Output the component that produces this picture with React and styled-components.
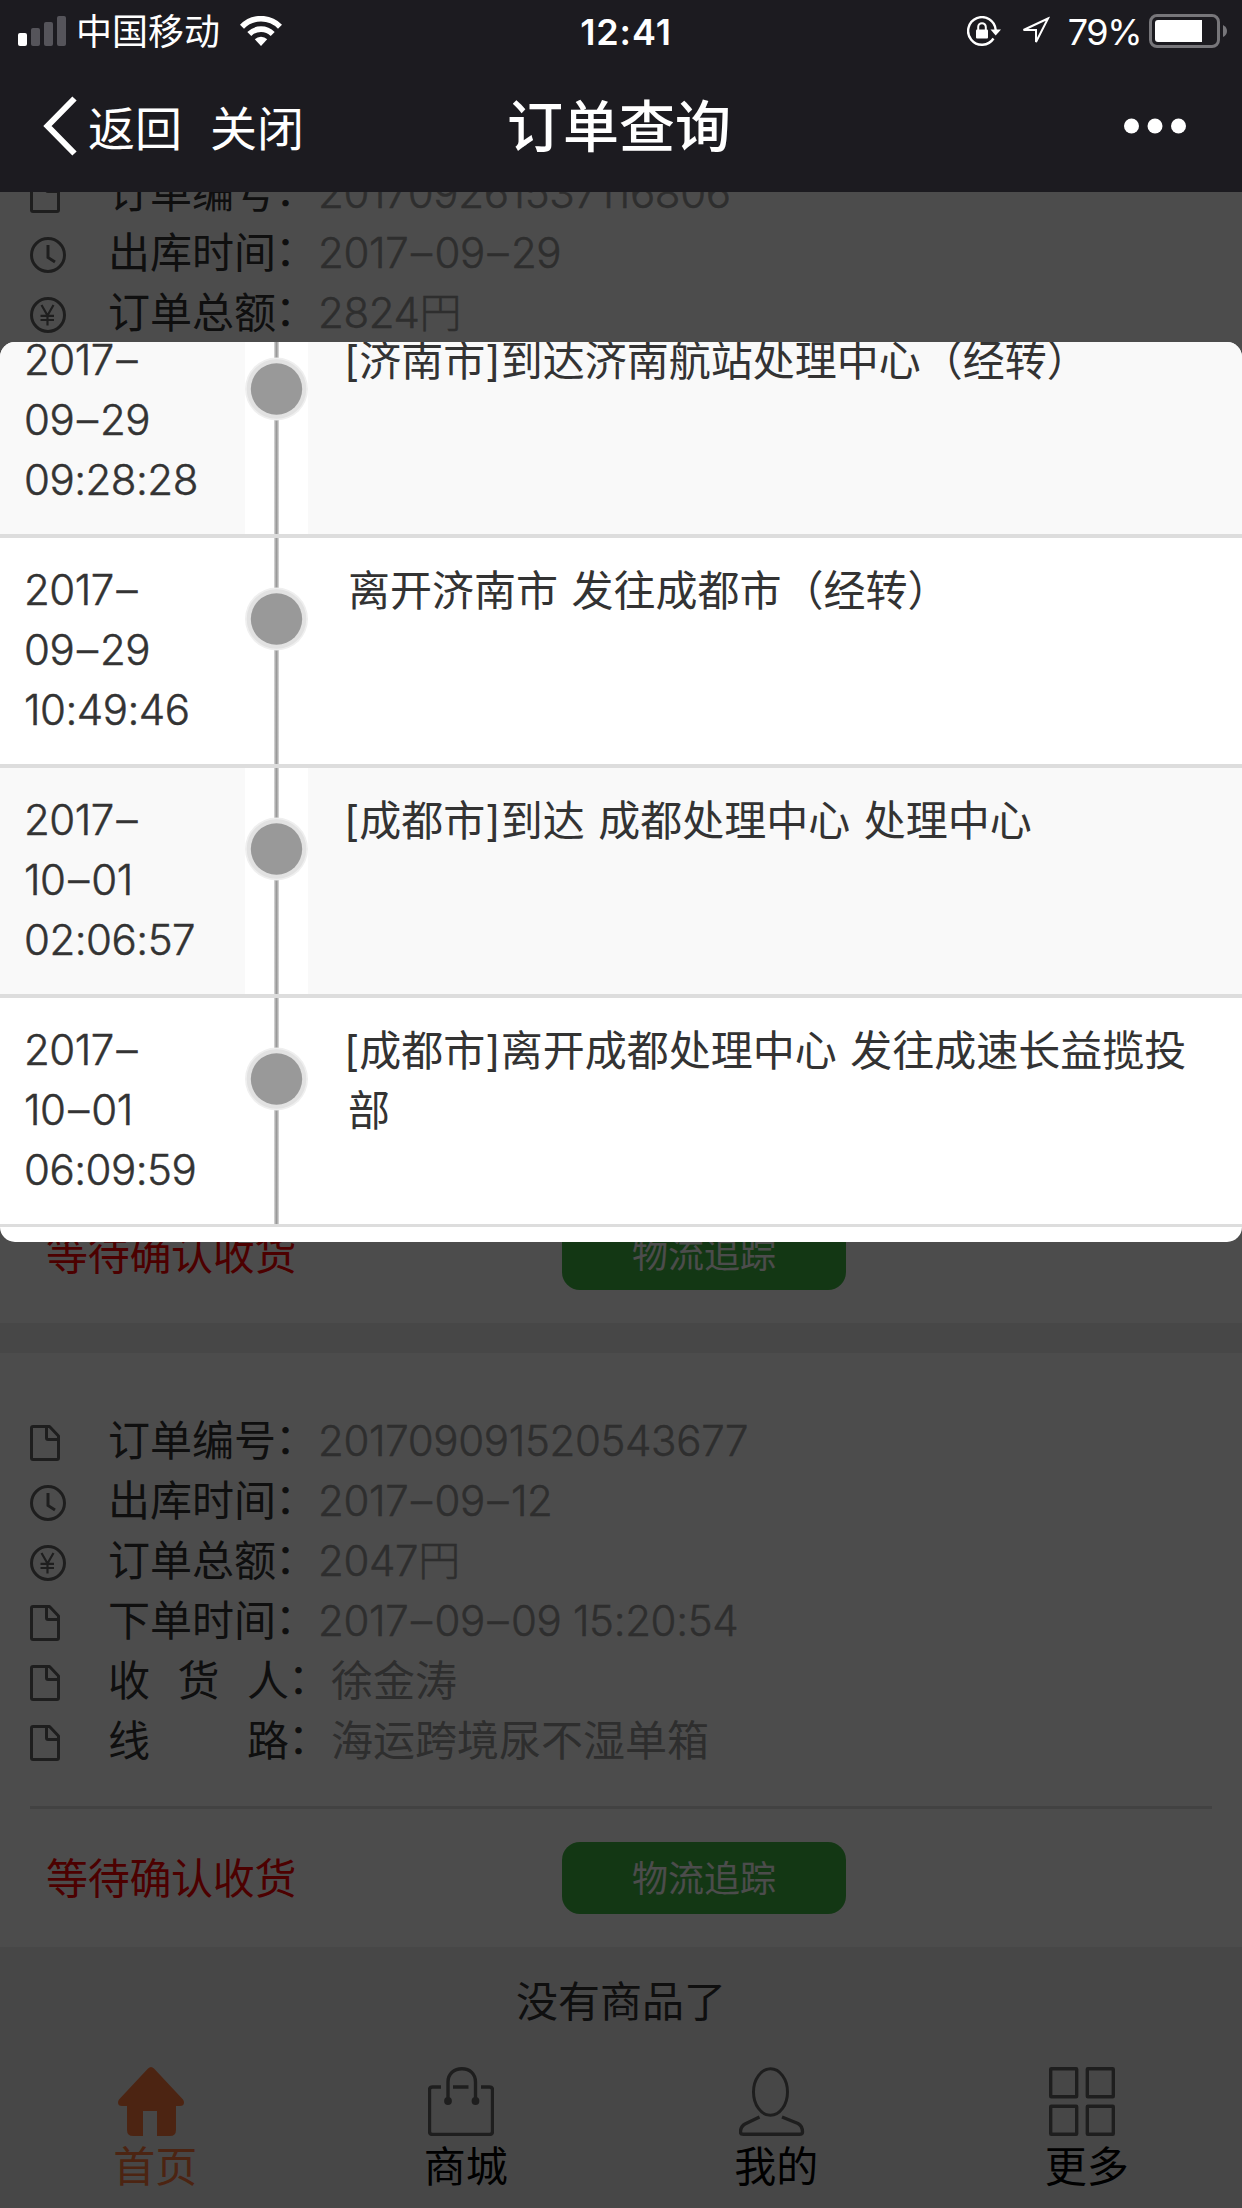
import React from "react";
import styled, { createGlobalStyle } from "styled-components";

const orders = [
  {
    rows: [
      { icon: "doc", label: "订单编号", value: "201709261537116806" },
      { icon: "clock", label: "出库时间", value: "2017–09–29" },
      { icon: "yen", label: "订单总额", value: "2824円" },
    ],
  },
  { rows: [], status: "等待确认收货" },
  {
    rows: [
      { icon: "doc", label: "订单编号", value: "201709091520543677" },
      { icon: "clock", label: "出库时间", value: "2017–09–12" },
      { icon: "yen", label: "订单总额", value: "2047円" },
      { icon: "doc", label: "下单时间", value: "2017–09–09 15:20:54" },
      { icon: "doc", label: "收货人", value: "徐金涛", wide: true },
      { icon: "doc", label: "线路", value: "海运跨境尿不湿单箱", wide: true },
    ],
    status: "等待确认收货",
  },
];

const tracks = [
  { time: ["2017–", "09–29", "09:28:28"], text: "[济南市]到达济南航站处理中心（经转）" },
  { time: ["2017–", "09–29", "10:49:46"], text: "离开济南市 发往成都市（经转）" },
  { time: ["2017–", "10–01", "02:06:57"], text: "[成都市]到达 成都处理中心 处理中心" },
  { time: ["2017–", "10–01", "06:09:59"], text: "[成都市]离开成都处理中心 发往成速长益揽投部" },
];

const tabs = [
  { icon: "home", label: "首页", active: true },
  { icon: "bag", label: "商城" },
  { icon: "user", label: "我的" },
  { icon: "grid", label: "更多" },
];

const RowIcon = ({ type }) => {
  if (type === "clock") {
    return (
      <svg width="36" height="36" viewBox="0 0 36 36" fill="none" stroke="#666" strokeWidth="3">
        <circle cx="18" cy="18" r="16.5" />
        <path d="M18 8v12.5l7 4.5" />
      </svg>
    );
  }
  if (type === "yen") {
    return (
      <svg width="36" height="36" viewBox="0 0 36 36" fill="none" stroke="#666" strokeWidth="3">
        <circle cx="18" cy="18" r="16.5" />
        <path d="M11.5 8l6 10.5M23.5 8l-6 10.5M17.5 18v10.5M10.5 18.8h13.5M10.5 23h13.5" strokeWidth="2.2" />
      </svg>
    );
  }
  return (
    <svg width="30" height="36" viewBox="0 0 30 36" fill="none" stroke="#666" strokeWidth="3" strokeLinejoin="round">
      <path d="M3 1.5h16.5l9 9.5v22q0 1.5-1.5 1.5H3q-1.5 0-1.5-1.5V3q0-1.5 1.5-1.5z" />
      <path d="M16.5 2v11q0 1.5 1.5 1.5h10.5" />
    </svg>
  );
};

const TabIcon = ({ type }) => (
  <svg width="66" height="69" viewBox="0 0 66 69" fill="none" stroke="#666" strokeWidth="3.4">
    {type === "home" && (
      <path
        d="M30 1.5q3-3 6 0l29 31q1 1.5 1 3 0 3.5-4 3.5h-4v24q0 6-6 6H39V44H25v25H15q-6 0-6-6V39H4q-4 0-4-3.5 0-1.5 1-3z"
        fill="#ff7b3f"
        stroke="none"
      />
    )}
    {type === "bag" && (
      <>
        <path d="M13 20H4.5q-3 0-3 3v41.5q0 3 3 3h57q3 0 3-3V23q0-3-3-3H53M25 20h15.5" />
        <path d="M20 33V15C20 7 26 1.7 34 1.7S47.5 7 47.5 15v18" />
        <circle cx="20" cy="34" r="2.2" fill="#666" />
        <circle cx="47.5" cy="34" r="2.2" fill="#666" />
      </>
    )}
    {type === "user" && (
      <>
        <ellipse cx="31.5" cy="25" rx="17" ry="23.3" strokeWidth="3" />
        <path d="M20.5 50L6 57q-4.5 2.5-4.5 8 0 2.3 3 2.3h56q3 0 3-2.3 0-6-4.5-8.5L43 50" />
      </>
    )}
    {type === "grid" && (
      <>
        <rect x="1.7" y="1.7" width="26" height="28" rx="0.5" />
        <rect x="38.3" y="1.7" width="26" height="28" rx="0.5" />
        <rect x="1.7" y="39.3" width="26" height="28" rx="0.5" />
        <rect x="38.3" y="39.3" width="26" height="28" rx="0.5" />
      </>
    )}
  </svg>
);

const SignalIcon = () => (
  <svg width="48" height="30" viewBox="0 0 48 30" fill="#55545a">
    <rect x="0" y="17" width="9" height="13" rx="2" fill="#fff" />
    <rect x="13" y="12" width="9" height="18" rx="2" />
    <rect x="26" y="6" width="9" height="24" rx="2" />
    <rect x="39" y="0" width="9" height="30" rx="2" />
  </svg>
);

const WifiIcon = () => (
  <svg width="42" height="30" viewBox="0 0 42 30" fill="none" stroke="#fff" strokeWidth="5.6">
    <path d="M2 10.7a26.5 26.5 0 0 1 38 0" />
    <path d="M9.3 18a16.5 16.5 0 0 1 23.4 0" />
    <path d="M14.8 23.3a8.8 8.8 0 0 1 12.4 0L21 30z" fill="#fff" stroke="none" />
  </svg>
);

const LockIcon = () => (
  <svg width="35" height="30" viewBox="0 0 35 30" fill="none" stroke="#fff" strokeWidth="2.4">
    <path d="M26.5 22.5A13.8 13.8 0 1 1 28.7 14" />
    <path d="M23.5 13.5h10.5l-5.3 6z" fill="#fff" stroke="none" />
    <rect x="9" y="13.5" width="12" height="9" rx="1" fill="#fff" stroke="none" />
    <path d="M11.2 14v-3a3.8 3.8 0 0 1 7.6 0v3" strokeWidth="2" />
  </svg>
);

const LocationIcon = () => (
  <svg width="30" height="30" viewBox="0 0 30 30" fill="none" stroke="#fff" strokeWidth="2">
    <path d="M28 2.5L3.5 14H16v12z" />
  </svg>
);

const BatteryIcon = () => (
  <svg width="79" height="34" viewBox="0 0 79 34">
    <rect x="1.5" y="1.5" width="68" height="31" rx="6.5" fill="none" stroke="#77767a" strokeWidth="3" />
    <path d="M9 6h44v22H9q-3 0-3-3V9q0-3 3-3z" fill="#fff" />
    <path d="M74 11q4 2 4 6t-4 6z" fill="#77767a" />
  </svg>
);

const BackIcon = () => (
  <svg width="34" height="60" viewBox="0 0 34 60" fill="none" stroke="#fff" strokeWidth="6">
    <path d="M31.5 2.5L4.5 30l27 27.5" />
  </svg>
);

const MoreIcon = () => (
  <svg width="62" height="16" viewBox="0 0 62 16" fill="#fff">
    <circle cx="7.5" cy="8" r="7.5" />
    <circle cx="31" cy="8" r="7.5" />
    <circle cx="54.5" cy="8" r="7.5" />
  </svg>
);

const Dot = () => (
  <svg width="63" height="64" viewBox="0 0 63 64">
    <circle cx="31.5" cy="32" r="31.5" fill="#efefef" />
    <circle cx="31.5" cy="32" r="29.8" fill="#e2e2e2" />
    <circle cx="31.5" cy="32" r="25.7" fill="#999" />
  </svg>
);

// dates get a little air round their dashes
const DateText = ({ children }) =>
  children.split(/(–)/).map((part, i) => (part === "–" ? <Dash key={i}>–</Dash> : part));

export default function App() {
  return (
    <Screen>
      <GlobalStyle />
      <Header>
        <StatusBar>
          <StatusSide>
            <SignalIcon />
            <Carrier>中国移动</Carrier>
            <WifiIcon />
          </StatusSide>
          <Clock>12:41</Clock>
          <StatusSide $end>
            <LockIcon />
            <LocationIcon />
            <Percent>79%</Percent>
            <BatteryIcon />
          </StatusSide>
        </StatusBar>
        <NavBar>
          <NavSide>
            <BackIcon />
            <NavText>返回</NavText>
            <NavText>关闭</NavText>
          </NavSide>
          <Title>订单查询</Title>
          <NavSide $end>
            <MoreIcon />
          </NavSide>
        </NavBar>
      </Header>

      <Content>
        <OrderList>
          {orders.map((order, i) => (
            <OrderCard key={i}>
              {order.rows.map((row) => (
                <OrderRow key={row.label}>
                  <IconCell>
                    <RowIcon type={row.icon} />
                  </IconCell>
                  <Label $wide={row.wide}>
                    {row.wide ? row.label.split("").map((c) => <span key={c}>{c}</span>) : row.label}
                  </Label>
                  <Colon>：</Colon>
                  <Value $wide={row.wide}>
                    <DateText>{row.value}</DateText>
                  </Value>
                </OrderRow>
              ))}
              {order.status && (
                <OrderFooter>
                  <Status>{order.status}</Status>
                  <TrackButton>物流追踪</TrackButton>
                </OrderFooter>
              )}
            </OrderCard>
          ))}
        </OrderList>
        <NoMore>没有商品了</NoMore>
        <TabBar>
          {tabs.map((tab) => (
            <Tab key={tab.label} $active={tab.active}>
              <TabIcon type={tab.icon} />
              <TabLabel>{tab.label}</TabLabel>
            </Tab>
          ))}
        </TabBar>

        <Mask />
        <Dialog>
          <TrackList>
            {tracks.map((track) => (
              <TrackRow key={track.time.join("")}>
                <TrackTime>
                  {track.time.map((t) => (
                    <span key={t}>
                      <DateText>{t}</DateText>
                    </span>
                  ))}
                </TrackTime>
                <TrackLine>
                  <Dot />
                </TrackLine>
                <TrackText $bracket={track.text[0] === "["}>{track.text}</TrackText>
              </TrackRow>
            ))}
          </TrackList>
        </Dialog>
      </Content>
    </Screen>
  );
}

const GlobalStyle = createGlobalStyle`
  * {
    box-sizing: border-box;
  }
  body {
    margin: 0;
    font-family: Inter, "Noto Sans CJK SC", sans-serif;
    font-size: 42px;
    line-height: 60px;
    color: #333;
  }
  svg {
    display: block;
    flex-shrink: 0;
  }
`;

const Screen = styled.div`
  width: 1242px;
  height: 2208px;
  display: flex;
  flex-direction: column;
  overflow: hidden;
`;

const Header = styled.header`
  height: 192px;
  flex-shrink: 0;
  color: #fff;
  background-color: #1c1b20;
`;

const StatusBar = styled.div`
  height: 60px;
  padding: 0 14px 0 18px;
  display: grid;
  grid-template-columns: 1fr auto 1fr;
  align-items: center;
  font-size: 36px;
`;

const StatusSide = styled.div`
  display: flex;
  align-items: center;
  gap: ${(p) => (p.$end ? "18px" : "0")};
  justify-content: ${(p) => (p.$end ? "flex-end" : "flex-start")};
`;

const Carrier = styled.span`
  margin: 2px 20px 0 10px;
`;

const Clock = styled.span`
  padding: 1px 0 0 6px;
  font-weight: 600;
  letter-spacing: 0.9px;
`;

const Percent = styled.span`
  margin: 1px -10px 0 0;
  letter-spacing: -1.5px;
`;

const NavBar = styled.div`
  height: 132px;
  padding: 0 56px 0 43px;
  display: grid;
  grid-template-columns: 1fr auto 1fr;
  align-items: center;
`;

const NavSide = styled.div`
  display: flex;
  align-items: center;
  justify-content: ${(p) => (p.$end ? "flex-end" : "flex-start")};
`;

const NavText = styled.span`
  margin: 5px 17px 0 11px;
  font-size: 47px;
`;

const Title = styled.h1`
  margin: 2px 0 0 9px;
  font-size: 56px;
  font-weight: 500;
`;

const Content = styled.main`
  position: relative;
  flex: 1;
  overflow: hidden;
  background-color: #eee;
`;

const OrderList = styled.div`
  margin-top: -87px;
  display: flex;
  flex-direction: column;
  gap: 30px;
`;

const OrderCard = styled.section`
  height: 594px;
  padding-top: 57px;
  display: flex;
  flex-direction: column;
  background-color: #fff;
`;

const OrderRow = styled.div`
  height: 60px;
  padding: 2px 0 0 30px;
  display: flex;
  align-items: center;
`;

const IconCell = styled.span`
  width: 78px;
  padding-top: 4px;
`;

const Label = styled.span`
  width: ${(p) => (p.$wide ? "181px" : "168px")};
  display: flex;
  justify-content: space-between;
`;

const Colon = styled.span`
  width: 42px;
  margin: -4px 1px 0 -1px;
`;

const Value = styled.span`
  color: #999;
  font-weight: ${(p) => (p.$wide ? 400 : 300)};
  letter-spacing: ${(p) => (p.$wide ? "0" : "-0.35px")};
  -webkit-text-stroke: ${(p) => (p.$wide ? "0" : "0.5px #999")};
`;

const Dash = styled.span`
  margin: 0 2.7px;
`;

const OrderFooter = styled.div`
  margin: auto 30px 0;
  height: 141px;
  padding-left: 16px;
  display: grid;
  grid-template-columns: 516px 284px;
  align-items: center;
  border-top: 3px solid #ddd;
`;

const Status = styled.span`
  padding-top: 2px;
  color: #f00;
  letter-spacing: -0.3px;
`;

const TrackButton = styled.button`
  height: 72px;
  padding: 0 0 4px;
  border: none;
  border-radius: 18px;
  color: #fff;
  background-color: #40b843;
  font-family: inherit;
  font-size: 36px;
`;

const NoMore = styled.p`
  height: 108px;
  margin: 0;
  line-height: 110px;
  text-align: center;
`;

const TabBar = styled.nav`
  height: 153px;
  padding-top: 12px;
  display: grid;
  grid-template-columns: repeat(4, 1fr);
`;

const Tab = styled.a`
  display: flex;
  flex-direction: column;
  align-items: center;
  color: ${(p) => (p.$active ? "#ff7b3f" : "#000")};

  svg {
    margin: 0 9px 1px 0;
  }
`;

const TabLabel = styled.span`
  height: 60px;
`;

const Mask = styled.div`
  position: absolute;
  inset: 0;
  background-color: rgba(0, 0, 0, 0.7);
`;

const Dialog = styled.div`
  position: absolute;
  top: 150px;
  left: 0;
  right: 0;
  height: 900px;
  overflow: hidden;
  border-radius: 15px;
  background-color: #fff;
`;

const TrackList = styled.div`
  margin-top: -34px;
`;

const TrackRow = styled.div`
  display: grid;
  grid-template-columns: 245px 63px 1fr;
  border-bottom: 4px solid #ddd;
  background-color: #fff;

  &:nth-child(odd) {
    background-color: #f9f9f9;
  }

  &:last-child {
    border-bottom-width: 3px;
  }
`;

const TrackTime = styled.div`
  height: 226px;
  padding: 22px 0 0 24px;
  display: flex;
  flex-direction: column;
  font-weight: 300;
  letter-spacing: -0.5px;
  -webkit-text-stroke: 0.5px #333;
`;

const TrackLine = styled.div`
  padding-top: 49px;
  background: linear-gradient(to right, #ddd, #999 45%, #999 55%, #ddd) 29px 0 / 5px 100% no-repeat #fff;
`;

const TrackText = styled.div`
  padding: 23px 36px 0 40px;
  text-indent: ${(p) => (p.$bracket ? "-4px" : "0")};
  word-spacing: 1.8px;
`;
